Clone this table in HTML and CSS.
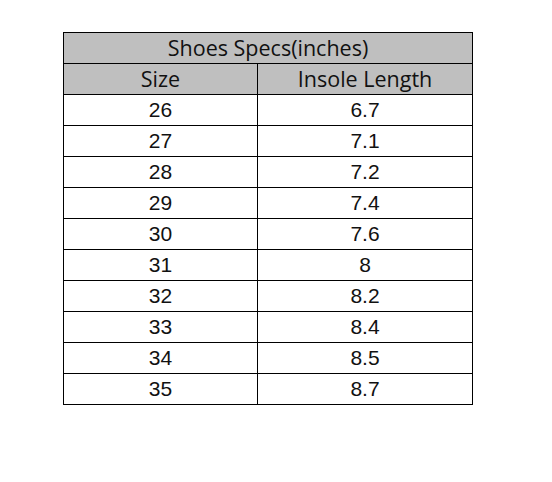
FILE: index.html
```html
<!DOCTYPE html>
<html>
<head>
<meta charset="utf-8">
<link rel="stylesheet" href="styles.css">
</head>
<body>
<table class="specs">
  <colgroup><col class="c1"><col class="c2"></colgroup>
  <tr class="head"><th colspan="2">Shoes Specs(inches)</th></tr>
  <tr class="head"><th>Size</th><th>Insole Length</th></tr>
  <tr><td>26</td><td>6.7</td></tr>
  <tr><td>27</td><td>7.1</td></tr>
  <tr><td>28</td><td>7.2</td></tr>
  <tr><td>29</td><td>7.4</td></tr>
  <tr><td>30</td><td>7.6</td></tr>
  <tr><td>31</td><td>8</td></tr>
  <tr><td>32</td><td>8.2</td></tr>
  <tr><td>33</td><td>8.4</td></tr>
  <tr><td>34</td><td>8.5</td></tr>
  <tr><td>35</td><td>8.7</td></tr>
</table>
</body>
</html>
```
FILE: styles.css
```css
html, body {
  margin: 0;
  padding: 0;
  background: #ffffff;
}
body {
  padding: 32px 0 0 63px;
}
.specs {
  border-collapse: collapse;
  width: 409px;
  table-layout: fixed;
  color: #111;
}
.c1 { width: 194px; }
.c2 { width: 215px; }
.specs th, .specs td {
  border: 1px solid #000;
  height: 30px;
  padding: 0;
  text-align: center;
  vertical-align: middle;
}
.specs td {
  font-family: "Liberation Sans", Arial, sans-serif;
  font-size: 21px;
  line-height: 24px;
}
.head th {
  background: #bfbfbf;
  font-family: "Open Sans", "Noto Sans", sans-serif;
  font-weight: normal;
  font-size: 21.5px;
  line-height: 26px;
}
```
